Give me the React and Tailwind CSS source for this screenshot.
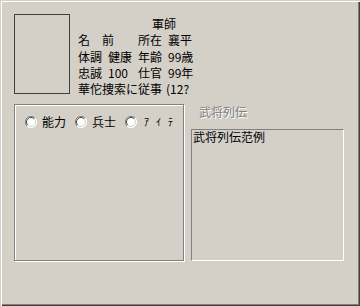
import React from 'react';

const font = { fontFamily: '"Noto Sans CJK JP", "Noto Sans CJK SC", sans-serif' };

const Radio = ({ label, small }) => (
    <div className="flex items-center">
        <svg width="12" height="12" viewBox="0 0 12 12" className="shrink-0">
            <circle cx="6" cy="6" r="5.5" fill="#fff" />
            <path d="M10 2 A5.5 5.5 0 0 0 2 10" fill="none" stroke="#808080" strokeWidth="1" />
            <path d="M9.2 2.8 A4.5 4.5 0 0 0 2.8 9.2" fill="none" stroke="#404040" strokeWidth="1" />
            <path d="M2 10 A5.5 5.5 0 0 0 10 2" fill="none" stroke="#fff" strokeWidth="1" />
            <path d="M2.8 9.2 A4.5 4.5 0 0 0 9.2 2.8" fill="none" stroke="#d4d0c8" strokeWidth="1" />
        </svg>
        <span className={small ? 'ml-[7px] text-[10px] tracking-[7px]' : 'ml-[5px] text-[12px]'}>{label}</span>
    </div>
);

export default function App() {
    const rows = [
        ['体調', '健康', '年齢', '99歳'],
        ['忠誠', '100', '仕官', '99年'],
    ];

    return (
        <div
            className="w-[360px] h-[306px] bg-[#d4d0c8] text-black shadow-[inset_1px_1px_0_#d4d0c8,inset_2px_2px_0_#fff,inset_-1px_-1px_0_#404040,inset_-2px_-2px_0_#808080] flex flex-col pt-[14px] pl-[14px] overflow-hidden"
            style={font}
        >
            <div className="flex h-[90px]">
                <div className="w-[56px] h-[80px] border border-[#404040]" />
                <div className="ml-[8px] pt-[2px] text-[12px] leading-[16.25px]">
                    <div className="pl-[74px]">軍師</div>
                    <div className="grid grid-cols-[30px_30px_30px_40px]">
                        <div className="col-span-2">名　前</div>
                        <div>所在</div>
                        <div>襄平</div>
                        {rows.map((r) =>
                            r.map((c, i) => <div key={r[0] + i} className="whitespace-nowrap">{c}</div>)
                        )}
                        <div className="col-span-2 overflow-hidden whitespace-nowrap">華佗捜索に</div>
                        <div>従事</div>
                        <div className="-ml-[2px] whitespace-nowrap">(12?</div>
                    </div>
                </div>
            </div>

            <div className="flex">
                <div className="w-[170px] h-[157px] border border-[#808080] shadow-[inset_1px_1px_0_#fff,1px_1px_0_#fff]">
                    <div className="flex items-center gap-[9px] pl-[10px] pt-[10px] text-[12px] leading-[14px]">
                        <Radio label="能力" />
                        <Radio label="兵士" />
                        <Radio label="ｱｲﾃ" small />
                    </div>
                </div>
                <div className="ml-[7px] flex flex-col">
                    <div className="pl-[8px] h-[25px] text-[12px] leading-[16px] text-[#808080] [text-shadow:1px_1px_0_#fff]">
                        武将列伝
                    </div>
                    <div className="w-[153px] h-[132px] border border-t-[#808080] border-l-[#808080] border-b-white border-r-white px-[1px] text-[12px] leading-[14px]">
                        武将列伝范例
                    </div>
                </div>
            </div>
        </div>
    );
}
